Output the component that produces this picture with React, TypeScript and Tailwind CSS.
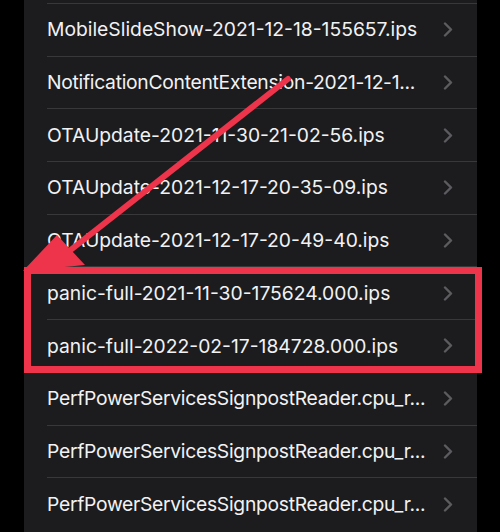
import React from 'react';

// long names are already cut by iOS; they sit a bit tighter
const files = [
  { name: 'MobileSlideShow-2021-12-18-155657.ips' },
  { name: 'NotificationContentExtension-2021-12-1...', cut: true },
  { name: 'OTAUpdate-2021-11-30-21-02-56.ips' },
  { name: 'OTAUpdate-2021-12-17-20-35-09.ips' },
  { name: 'OTAUpdate-2021-12-17-20-49-40.ips' },
  { name: 'panic-full-2021-11-30-175624.000.ips' },
  { name: 'panic-full-2022-02-17-184728.000.ips' },
  { name: 'PerfPowerServicesSignpostReader.cpu_r...', cut: true },
  { name: 'PerfPowerServicesSignpostReader.cpu_r...', cut: true },
  { name: 'PerfPowerServicesSignpostReader.cpu_r...', cut: true },
];

function Chevron() {
  return (
    <svg width="10" height="15" viewBox="0 0 10 15" className="shrink-0">
      <polyline
        points="2,1.5 8,7.5 2,13.5"
        fill="none"
        stroke="#5c5c60"
        strokeWidth="2.4"
        strokeLinecap="round"
        strokeLinejoin="round"
      />
    </svg>
  );
}

export default function App() {
  return (
    <div className="relative w-[500px] h-[532px] overflow-hidden bg-black font-['Inter','Liberation_Sans',sans-serif]">
      <div className="ml-[24px] w-[453px] h-full bg-[#1c1c1e] pl-[23px]">
        <div className="h-[3px]" />
        {files.map((f, i) => (
          <div
            key={i}
            className="flex items-center h-[52.7px] border-t border-[#38383a] pr-[24px]"
          >
            <span
              className={
                'flex-1 min-w-0 whitespace-nowrap overflow-hidden text-[19.3px] text-[#f2f2f4] ' +
                (f.cut ? 'tracking-[-0.28px]' : '')
              }
            >
              {f.name}
            </span>
            <Chevron />
          </div>
        ))}
      </div>

      {/* highlight box */}
      <div className="absolute left-[24px] top-[267px] w-[458px] h-[106px] border-[7px] border-[#ee344b]" />

      {/* arrow */}
      <svg className="absolute inset-0" width="500" height="532" viewBox="0 0 500 532">
        <line x1="288" y1="79" x2="68" y2="252" stroke="#ee344b" strokeWidth="6" strokeLinecap="round" />
        <polygon points="23,271 57,235 85,265" fill="#ee344b" />
      </svg>
    </div>
  );
}
